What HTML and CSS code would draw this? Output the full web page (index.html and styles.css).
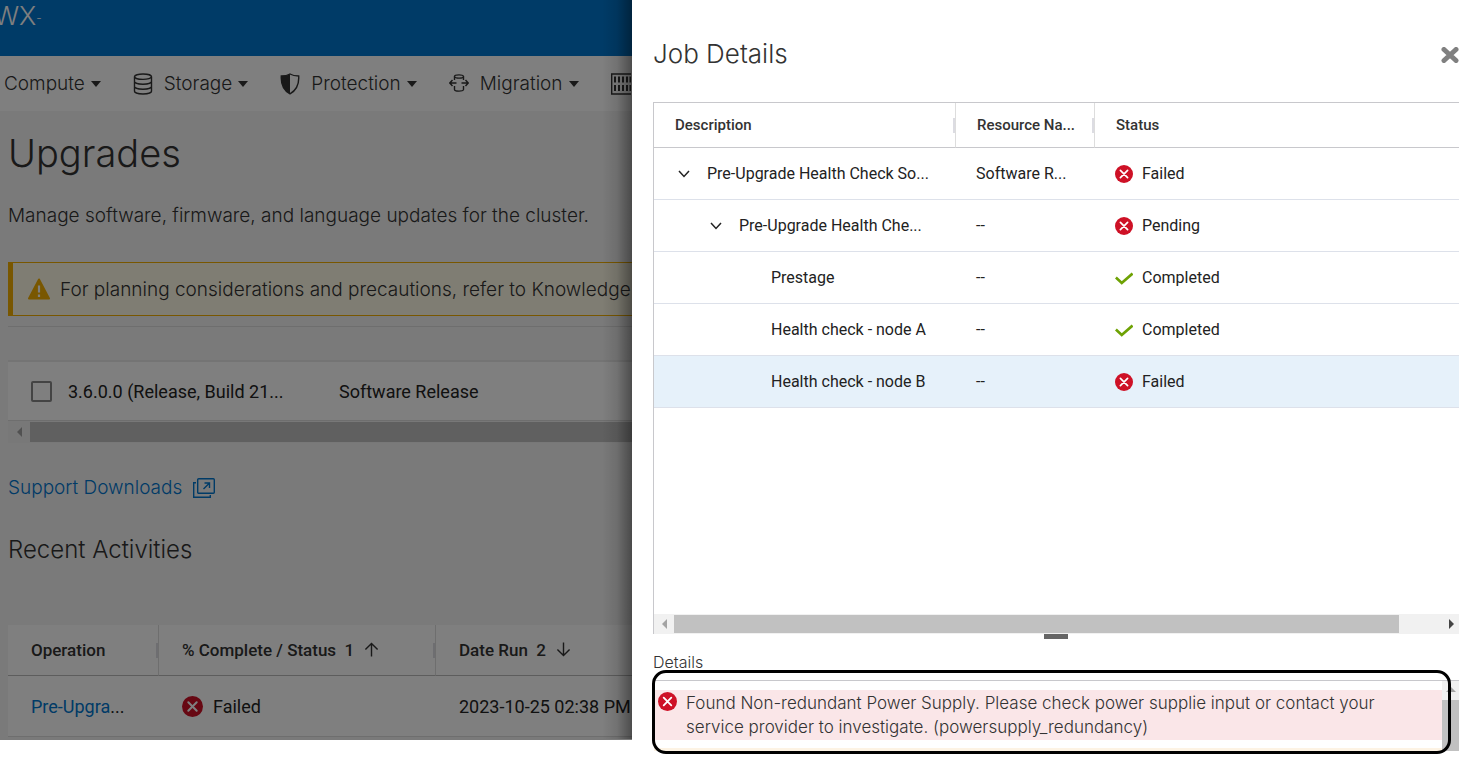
FILE: index.html
```html
<!DOCTYPE html>
<html lang="en">
<head>
    <meta charset="UTF-8" />
    <meta name="viewport" content="width=device-width, initial-scale=1.0" />
    <title>Upgrades</title>
    <link rel="stylesheet" href="styles.css">
</head>
<body>
    <!-- shared status icons -->
    <svg class="sprite" aria-hidden="true">
      <symbol id="icon-failed" viewBox="0 0 20 20">
        <circle cx="10" cy="10" r="10" fill="#ce1126" />
        <path d="M6 6l8 8M14 6l-8 8" stroke="#fff" stroke-width="1.9" stroke-linecap="round" />
      </symbol>
      <symbol id="icon-done" viewBox="0 0 20 20">
        <path d="M1 9.500l6.500 6L19.500 5" fill="none" stroke="#6ea204" stroke-width="3" />
      </symbol>
      <symbol id="icon-caret" viewBox="0 0 10 6">
        <path d="M0 0h10L5 6z" fill="#333" />
      </symbol>
      <symbol id="icon-chevron" viewBox="0 0 12 8">
        <path d="M1 1l5 5.500 5-5.500" fill="none" stroke="#222" stroke-width="1.500" />
      </symbol>
    </svg>

    <div class="layout">
      <div class="page">
        <header class="masthead">WX<span class="dash">-</span></header>

        <nav class="nav">
          <button class="nav-item">Compute<svg class="caret"><use href="#icon-caret" /></svg></button>
          <button class="nav-item">
            <svg class="nav-icon" viewBox="0 0 20 22" fill="none" stroke="#333" stroke-width="1.400">
              <ellipse cx="10" cy="3.700" rx="8.500" ry="2.700" />
              <path d="M1.500 3.700v14.600c0 1.500 3.800 2.700 8.500 2.700s8.500-1.200 8.500-2.700V3.700M1.500 8.600c0 1.500 3.800 2.700 8.500 2.700s8.500-1.200 8.500-2.700M1.500 13.500c0 1.500 3.800 2.700 8.500 2.700s8.500-1.200 8.500-2.700" />
            </svg>
            Storage<svg class="caret"><use href="#icon-caret" /></svg>
          </button>
          <button class="nav-item">
            <svg class="nav-icon" viewBox="0 0 20 22">
              <path d="M10 1c2.500 1.500 5.500 2 8.700 2 .5 8-2.700 14.500-8.700 17.800C4 17.500.8 11 1.300 3 4.500 3 7.500 2.500 10 1z" fill="none" stroke="#333" stroke-width="1.400" />
              <path d="M10 1v19.800C4 17.500.8 11 1.300 3 4.500 3 7.500 2.500 10 1z" fill="#333" />
            </svg>
            Protection<svg class="caret"><use href="#icon-caret" /></svg>
          </button>
          <button class="nav-item">
            <svg class="nav-icon" viewBox="0 0 20 22" fill="none" stroke="#333" stroke-width="1.400">
              <ellipse cx="10" cy="3.500" rx="4.500" ry="1.600" />
              <path d="M5.500 3.500V7M14.500 3.500V7M5.500 13v3.500c0 1 2 1.600 4.500 1.600s4.500-.6 4.500-1.600V13M7.500 10H1M3.500 7L.8 10l2.700 3M12.500 10H19M16.500 7l2.700 3-2.700 3" />
            </svg>
            Migration<svg class="caret"><use href="#icon-caret" /></svg>
          </button>
          <button class="nav-item" aria-label="Hardware">
            <svg class="nav-icon" viewBox="0 0 20 22" fill="none" stroke="#333">
              <path d="M30 1H.7v20H30" stroke-width="1.400" />
              <path d="M4 3.500v6M8 3.500v6M12 3.500v6M16 3.500v6M19.500 3.500v6M4 12v6M8 12v6M12 12v6M16 12v6M19.500 12v6" stroke-width="2" />
            </svg>
          </button>
        </nav>

        <main class="content">
          <h1>Upgrades</h1>
          <p class="intro">Manage software, firmware, and language updates for the cluster.</p>

          <div class="alert">
            <svg class="alert-icon" viewBox="0 0 22 22">
              <path d="M11 1.500L21 20.500H1z" fill="#f2af00" stroke="#f2af00" stroke-width="2" stroke-linejoin="round" />
              <path d="M11 7.500v7M11 16.500v2.500" stroke="#fff" stroke-width="2.200" />
            </svg>
            <span>For planning considerations and precautions, refer to Knowledge</span>
          </div>

          <div class="releases">
            <table class="release-table">
              <tr>
                <td class="check-cell"><input type="checkbox" class="check" aria-label="Select release 3.6.0.0"></td>
                <td class="release-name">3.6.0.0 (Release, Build 21...</td>
                <td>Software Release</td>
              </tr>
            </table>
            <div class="scroll-x">
              <span class="arrow-left"></span>
              <span class="thumb"></span>
            </div>
          </div>

          <a class="support" href="#">Support Downloads
            <svg class="external" viewBox="0 0 22 20" fill="none" stroke="#0076ce" stroke-width="1.400">
              <rect x="4.700" y=".7" width="16.600" height="14.600" rx="1" />
              <path d="M3 4.700H.7v14.600h16.600V17M10.500 11l5.500-5.500M11.500 5h5v5" />
            </svg>
          </a>

          <h2>Recent Activities</h2>

          <table class="activity">
            <thead>
              <tr>
                <th class="col-operation">Operation</th>
                <th class="col-complete">% Complete / Status&nbsp; 1
                  <svg class="sort" viewBox="0 0 16 16"><path d="M8 15.500V1.500M1.500 8L8 1.500 14.500 8" /></svg>
                </th>
                <th>Date Run&nbsp; 2
                  <svg class="sort" viewBox="0 0 16 16"><path d="M8 .5v14M1.500 8L8 14.500 14.500 8" /></svg>
                </th>
              </tr>
            </thead>
            <tbody>
              <tr>
                <td><a href="#">Pre-Upgra</a>...</td>
                <td><span class="status"><svg class="status-icon"><use href="#icon-failed" /></svg>Failed</span></td>
                <td>2023-10-25 02:38 PM</td>
              </tr>
            </tbody>
          </table>
        </main>
        <div class="backdrop"></div>
      </div>

      <aside class="drawer">
        <header class="drawer-head">
          <h2>Job Details</h2>
          <button class="close" aria-label="Close">
            <svg viewBox="0 0 18 16"><path d="M3 2.500l12 11M15 2.500l-12 11" stroke="#808080" stroke-width="5" stroke-linecap="round" /></svg>
          </button>
        </header>

        <div class="jobs">
          <table class="job-table">
            <thead>
              <tr>
                <th class="col-description">Description</th>
                <th class="col-resource">Resource Na...</th>
                <th>Status</th>
              </tr>
            </thead>
            <tbody>
              <tr>
                <td><span class="tree"><svg class="chevron"><use href="#icon-chevron" /></svg>Pre-Upgrade Health Check So...</span></td>
                <td>Software R...</td>
                <td><span class="status"><svg class="status-icon"><use href="#icon-failed" /></svg>Failed</span></td>
              </tr>
              <tr>
                <td><span class="tree level-2"><svg class="chevron"><use href="#icon-chevron" /></svg>Pre-Upgrade Health Che...</span></td>
                <td>--</td>
                <td><span class="status"><svg class="status-icon"><use href="#icon-failed" /></svg>Pending</span></td>
              </tr>
              <tr>
                <td><span class="tree level-3">Prestage</span></td>
                <td>--</td>
                <td><span class="status"><svg class="status-icon"><use href="#icon-done" /></svg>Completed</span></td>
              </tr>
              <tr>
                <td><span class="tree level-3">Health check - node A</span></td>
                <td>--</td>
                <td><span class="status"><svg class="status-icon"><use href="#icon-done" /></svg>Completed</span></td>
              </tr>
              <tr class="selected">
                <td><span class="tree level-3">Health check - node B</span></td>
                <td>--</td>
                <td><span class="status"><svg class="status-icon"><use href="#icon-failed" /></svg>Failed</span></td>
              </tr>
            </tbody>
          </table>
          <div class="scroll-x light">
            <span class="arrow-left"></span>
            <span class="thumb"></span>
            <span class="arrow-right"></span>
          </div>
        </div>
        <div class="grip"></div>

        <h3>Details</h3>
        <section class="details">
          <div class="messages">
            <div class="message">
              <svg class="message-icon"><use href="#icon-failed" /></svg>
              <p>Found Non-redundant Power Supply. Please check power supplie input or contact your service provider to investigate. (powersupply_redundancy)</p>
            </div>
            <div class="next-message"></div>
          </div>
          <div class="scroll-y"><span class="arrow-up"></span></div>
          <div class="callout"></div>
        </section>
      </aside>
    </div>
</body>
</html>
```
FILE: styles.css
```css
* {
  box-sizing: border-box;
}
body {
  margin: 0;
  background: #fff;
  color: #333;
  font-family: Inter, "Open Sans", sans-serif;
  font-size: 19px;
  font-weight: 300;
}
h1,
h2,
h3,
p {
  margin: 0;
  font-weight: 300;
}
button {
  border: none;
  padding: 0;
  background: none;
  color: inherit;
  font: inherit;
}
a {
  color: #0076ce;
  text-decoration: none;
}
table {
  border-collapse: separate;
  border-spacing: 0;
  table-layout: fixed;
  width: 100%;
  font-family: Roboto, sans-serif;
  font-size: 18px;
  font-weight: 400;
  color: #222;
}
th,
td {
  padding: 0;
  text-align: left;
  white-space: nowrap;
}
th {
  font-size: 17px;
  font-weight: 500;
  color: #333;
}
.sprite {
  display: none;
}
.layout {
  display: grid;
  grid-template-columns: 632fr 827fr;
  align-items: start;
}

/* page behind the drawer */
.page {
  position: relative;
  overflow: hidden;
  min-width: 0;
  background: #f5f5f5;
}
.backdrop {
  position: absolute;
  inset: 0;
  background: rgba(0, 0, 0, 0.5);
}
.masthead {
  height: 56px;
  padding-top: 2px;
  background: #0076ce;
  color: #fff;
  font-size: 26px;
  line-height: 28px;
  text-indent: -6px;
}
.dash {
  font-size: 12px;
  vertical-align: 3px;
}
.nav {
  display: flex;
  align-items: center;
  gap: 32px;
  height: 55px;
  padding-left: 4px;
  background: #fff;
}
.nav-item {
  display: flex;
  flex: none;
  align-items: center;
  white-space: nowrap;
}
.nav-icon {
  width: 20px;
  height: 22px;
  margin-right: 11px;
}
.caret {
  width: 10px;
  height: 6px;
  margin-left: 6px;
}
.content {
  padding: 20px 0 3px 8px;
}
h1 {
  font-size: 38px;
  line-height: 44px;
}
.intro {
  margin-top: 28px;
  line-height: 26px;
  white-space: nowrap;
}
.alert {
  display: flex;
  align-items: center;
  gap: 10px;
  height: 54px;
  margin-top: 33px;
  padding-left: 15px;
  border: 1px solid #f2af00;
  border-left-width: 5px;
  border-right: none;
  background: #fffae6;
  white-space: nowrap;
}
.alert-icon {
  flex: none;
  width: 22px;
  height: 22px;
}
.releases {
  margin-top: 10px;
  padding-top: 33px;
  border-top: 1px solid #ddd;
}
.release-table {
  border-top: 2px solid #e8e8e8;
  background: #fff;
}
.release-table td {
  height: 59px;
  border-bottom: 1px solid #ddd;
}
.check-cell {
  width: 60px;
}
.release-name {
  width: 271px;
}
.check {
  display: block;
  appearance: none;
  width: 21px;
  height: 21px;
  margin: 0 0 0 23px;
  border: 2px solid #888;
  border-radius: 2px;
}
.scroll-x {
  display: flex;
  align-items: center;
  height: 22px;
  background: #f1f1f1;
}
.scroll-x .thumb {
  flex: 1;
  height: 20px;
  background: #c1c1c1;
}
.arrow-left,
.arrow-right {
  border: 5px solid transparent;
}
.arrow-left {
  margin: 0 8px 0 4px;
  border-right-color: #a3a3a3;
}
.support {
  display: flex;
  align-items: center;
  gap: 11px;
  margin-top: 31px;
  line-height: 28px;
}
.external {
  width: 22px;
  height: 20px;
}
.content h2 {
  margin-top: 34px;
  font-size: 24px;
  line-height: 28px;
}
.activity {
  margin-top: 61px;
  background: #fff;
}
.activity th {
  height: 51px;
  padding-left: 23px;
  border-bottom: 1px solid #bbb;
}
.activity td {
  height: 61px;
  padding-left: 23px;
  border-bottom: 1px solid #ddd;
}
.activity .col-operation,
.activity .col-complete,
.job-table .col-description,
.job-table .col-resource {
  border-right: 1px solid #ddd;
  /* column resize handle */
  background: linear-gradient(#dcdce2, #dcdce2) right center / 2px 15px no-repeat;
}
.col-operation {
  width: 151px;
}
.col-complete {
  width: 277px;
}
.sort {
  width: 15px;
  height: 15px;
  margin-left: 6px;
  vertical-align: -1px;
  fill: none;
  stroke: #333;
  stroke-width: 1.5;
}
.status {
  display: flex;
  align-items: center;
  gap: 10px;
}
.status-icon {
  flex: none;
  width: 21px;
  height: 21px;
}

/* job details drawer */
.drawer {
  position: relative;
  min-width: 0;
  padding: 32px 0 24px 21px;
  background: #fff;
  font-size: 17px;
}
.drawer::before {
  content: "";
  position: absolute;
  top: 0;
  left: -30px;
  width: 30px;
  height: 739px;
  background: linear-gradient(to right, transparent, rgba(0, 0, 0, 0.1) 50%, rgba(0, 0, 0, 0.4));
}
.drawer-head {
  display: flex;
  align-items: center;
  justify-content: space-between;
  height: 42px;
}
.drawer-head h2 {
  font-size: 26px;
}
.close {
  padding-top: 4px;
}
.close svg {
  display: block;
  width: 18px;
  height: 16px;
}
.jobs {
  display: flex;
  flex-direction: column;
  justify-content: space-between;
  min-height: 532px;
  margin-top: 28px;
  border-top: 1px solid #c8c8cc;
  border-left: 1px solid #c8c8cc;
}
.job-table {
  font-size: 16px;
}
.job-table th {
  height: 45px;
  padding-left: 21px;
  border-bottom: 1px solid #c8c8cc;
  font-size: 15px;
}
.col-description {
  width: 302px;
}
.col-resource {
  width: 139px;
}
.job-table td {
  height: 52px;
  padding-left: 20px;
  border-bottom: 1px solid #dde1ea;
}
.job-table .selected td {
  background: #e6f1fa;
}
.tree {
  display: flex;
  align-items: center;
  gap: 17px;
  padding-left: 4px;
}
.level-2 {
  padding-left: 36px;
}
.level-3 {
  padding-left: 97px;
}
.chevron {
  width: 12px;
  height: 8px;
}
.job-table .status {
  gap: 9px;
}
.job-table .status-icon {
  width: 18px;
  height: 18px;
}
.light {
  height: 20px;
}
.light .thumb {
  flex: none;
  width: 90%;
  height: 18px;
}
.light .arrow-left {
  margin: 0 7px 0 3px;
}
.arrow-right {
  margin-left: auto;
  border-right: none;
  border-left-color: #444;
  margin-right: 5px;
}
.grip {
  width: 24px;
  height: 5px;
  margin: 0 auto;
  background: #666;
}
.drawer h3 {
  margin-top: 11px;
  font-size: 16px;
  line-height: 24px;
}
.details {
  position: relative;
  display: flex;
  height: 71px;
  margin-top: 6px;
  border-top: 1px solid #c8c8cc;
}
.messages {
  flex: 1;
  padding: 9px 0 0 1px;
}
.message {
  display: flex;
  gap: 9px;
  height: 50px;
  padding: 1px 60px 0 4px;
  background: #fae6e8;
  line-height: 24px;
}
.message-icon {
  flex: none;
  width: 19px;
  height: 19px;
  margin-top: 1px;
}
.next-message {
  height: 3px;
  margin-top: 8px;
  background: #fdf3e4;
}
.scroll-y {
  width: 17px;
  padding-top: 1px;
  background: linear-gradient(#f1f1f1 19px, #c1c1c1 19px);
}
.arrow-up {
  display: block;
  width: 10px;
  margin-left: 4px;
  border: 5px solid transparent;
  border-bottom-color: #a3a3a3;
}
.callout {
  position: absolute;
  top: -11px;
  right: 8px;
  bottom: -3px;
  left: -1px;
  border: 3px solid #000;
  border-radius: 14px;
}
```
